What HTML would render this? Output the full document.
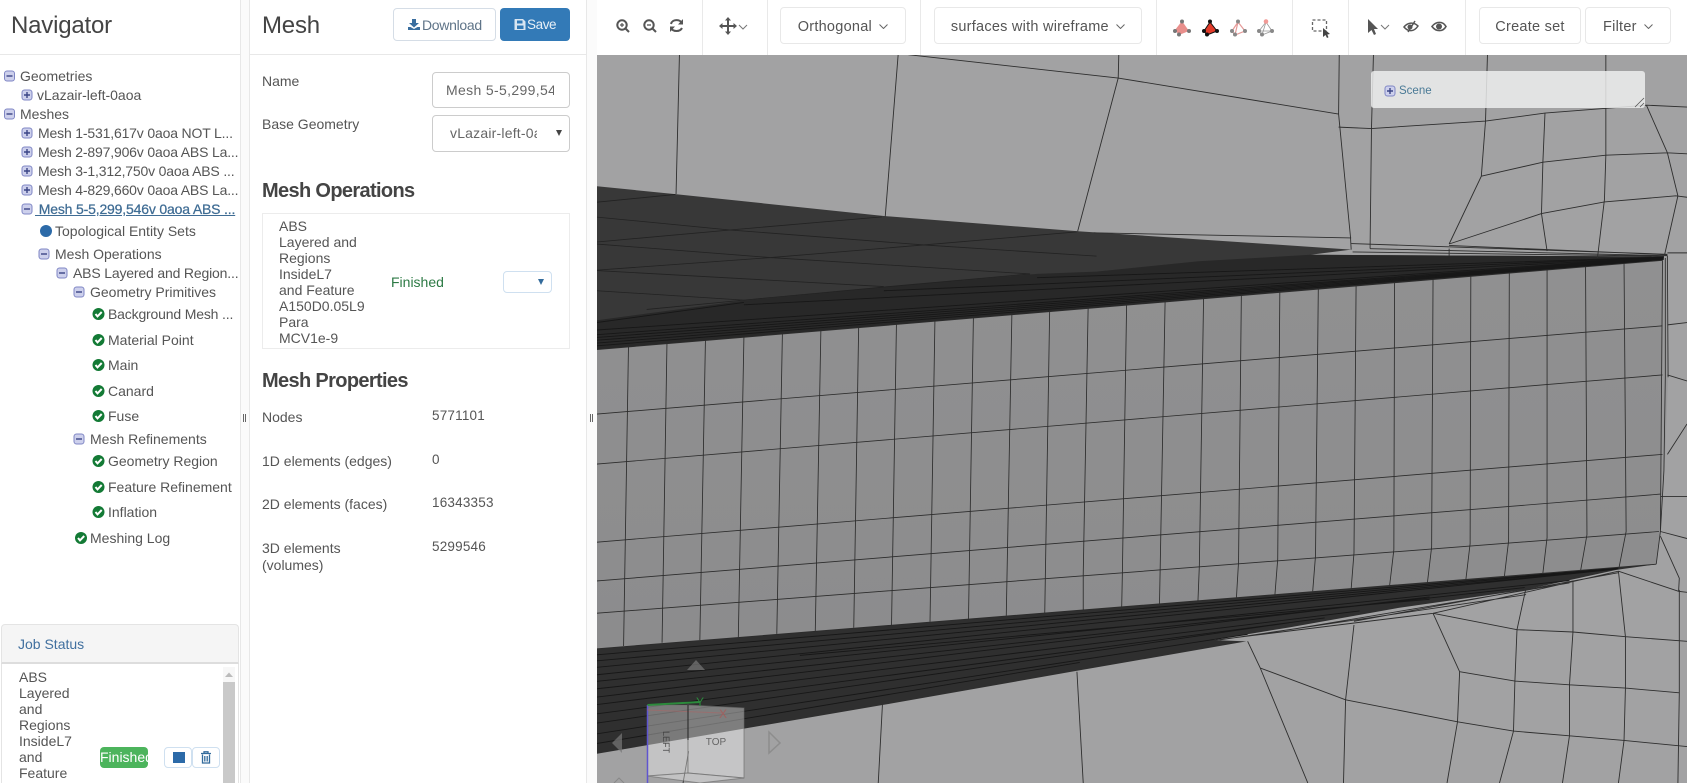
<!DOCTYPE html>
<html><head><meta charset="utf-8"><title>Mesh</title>
<style>
html,body{margin:0;padding:0;width:1687px;height:783px;overflow:hidden;background:#fff;font-family:"Liberation Sans",sans-serif;color:#555}
.a{position:absolute}
.t{position:absolute;white-space:nowrap;line-height:20px;font-size:14px;color:#555}
.m{letter-spacing:-.17px}
.h{font-size:20px;font-weight:bold;color:#444;letter-spacing:-.65px}
.v{font-size:13.5px;color:#555;letter-spacing:.2px}
.b{position:absolute;background:#fff;border:1px solid #e8e8e8;border-radius:4px;box-sizing:border-box;font-size:14.5px;color:#555;text-align:center;line-height:38px;letter-spacing:.25px}
.b svg{margin-left:3px;vertical-align:2px}
.sep{position:absolute;top:0;width:1px;height:55px;background:#e9e9e9}
svg.i{position:absolute;overflow:visible}
#m path{vector-effect:non-scaling-stroke}
</style></head><body>
<svg width="0" height="0" style="position:absolute"><defs>
<g id="mn"><rect x="-5" y="-5" width="10" height="10" rx="2.500" fill="#cdd0ec" stroke="#7f86c4"/><path d="M-3 0H3" stroke="#3b4586" stroke-width="1.400"/></g>
<g id="pl"><rect x="-5" y="-5" width="10" height="10" rx="2.500" fill="#cdd0ec" stroke="#7f86c4"/><path d="M-3 0H3M0-3V3" stroke="#3b4586" stroke-width="1.400"/></g>
<g id="ck"><circle r="6" fill="#137a35"/><path d="M-3 0L-1 2.400L3.200-2" fill="none" stroke="#fff" stroke-width="2"/></g>
</defs></svg>

<!-- panel bg -->
<div class="a" style="left:240px;top:0;width:10px;height:783px;background:#fbfbfb;border-left:1px solid #e8e8e8;border-right:1px solid #e8e8e8;box-sizing:border-box"></div>
<div class="a" style="left:586px;top:0;width:11px;height:783px;background:#fbfbfb;border-left:1px solid #e8e8e8;box-sizing:border-box"></div>
<div class="a" style="left:243px;top:414px;width:1px;height:8px;background:#666;box-shadow:2px 0 0 #666"></div>
<div class="a" style="left:590px;top:414px;width:1px;height:8px;background:#666;box-shadow:2px 0 0 #666"></div>
<div class="a" style="left:0;top:54px;width:240px;height:1px;background:#e8e8e8"></div>
<div class="a" style="left:250px;top:54px;width:336px;height:1px;background:#e8e8e8"></div>

<!-- navigator -->
<div class="t" style="left:11px;top:13px;font-size:24px;line-height:26px;color:#444;letter-spacing:-.2px">Navigator</div>
<svg class="i" style="left:0;top:0" width="240" height="560">
<use href="#mn" x="9.500" y="76"/><use href="#pl" x="27" y="95"/><use href="#mn" x="9.500" y="114"/>
<use href="#pl" x="27" y="133"/><use href="#pl" x="27" y="152"/><use href="#pl" x="27" y="171"/><use href="#pl" x="27" y="190"/><use href="#mn" x="27" y="209"/>
<circle cx="46" cy="231" r="6" fill="#2c6aa8"/>
<use href="#mn" x="44" y="254"/><use href="#mn" x="62" y="273"/><use href="#mn" x="79" y="292"/>
<use href="#ck" x="98.500" y="314"/><use href="#ck" x="98.500" y="340"/><use href="#ck" x="98.500" y="365"/><use href="#ck" x="98.500" y="391"/><use href="#ck" x="98.500" y="416"/>
<use href="#mn" x="79" y="439"/>
<use href="#ck" x="98.500" y="461"/><use href="#ck" x="98.500" y="487"/><use href="#ck" x="98.500" y="512"/><use href="#ck" x="81" y="538"/>
</svg>
<div class="t" style="left:20px;top:66px">Geometries</div>
<div class="t" style="left:37px;top:85px">vLazair-left-0aoa</div>
<div class="t" style="left:20px;top:104px">Meshes</div>
<div class="t m" style="left:38px;top:123px">Mesh 1-531,617v 0aoa NOT L...</div>
<div class="t m" style="left:38px;top:142px">Mesh 2-897,906v 0aoa ABS La...</div>
<div class="t m" style="left:38px;top:161px">Mesh 3-1,312,750v 0aoa ABS ...</div>
<div class="t m" style="left:38px;top:180px">Mesh 4-829,660v 0aoa ABS La...</div>
<div class="t m" style="left:35px;top:199px;color:#3f6c94;text-decoration:underline;-webkit-text-stroke:.25px #3f6c94">&nbsp;Mesh 5-5,299,546v 0aoa ABS ...</div>
<div class="t" style="left:55px;top:221px">Topological Entity Sets</div>
<div class="t" style="left:55px;top:244px">Mesh Operations</div>
<div class="t m" style="left:73px;top:263px">ABS Layered and Region...</div>
<div class="t" style="left:90px;top:282px">Geometry Primitives</div>
<div class="t m" style="left:108px;top:304px">Background Mesh ...</div>
<div class="t" style="left:108px;top:330px">Material Point</div>
<div class="t" style="left:108px;top:355px">Main</div>
<div class="t" style="left:108px;top:381px">Canard</div>
<div class="t" style="left:108px;top:406px">Fuse</div>
<div class="t" style="left:90px;top:429px">Mesh Refinements</div>
<div class="t" style="left:108px;top:451px">Geometry Region</div>
<div class="t" style="left:108px;top:477px">Feature Refinement</div>
<div class="t" style="left:108px;top:502px">Inflation</div>
<div class="t" style="left:90px;top:528px">Meshing Log</div>

<!-- job status -->
<div class="a" style="left:1px;top:624px;width:238px;height:40px;background:#f5f5f5;border:1px solid #e4e4e4;border-bottom:2px solid #ddd;border-radius:4px 4px 0 0;box-sizing:border-box"></div>
<div class="t" style="left:18px;top:634px;color:#41709f">Job Status</div>
<div class="a" style="left:1px;top:664px;width:1px;height:119px;background:#e4e4e4"></div>
<div class="a" style="left:238px;top:664px;width:1px;height:119px;background:#e4e4e4"></div>
<div class="a" style="left:223px;top:667px;width:12px;height:116px;background:#f7f7f7"></div>
<div class="a" style="left:223px;top:682px;width:12px;height:101px;background:#c9c9c9"></div>
<svg class="i" style="left:223px;top:671px" width="12" height="8"><path d="M2 6L6 1.500L10 6Z" fill="#bbb"/></svg>
<div class="t" style="left:19px;top:669px;font-size:14px;line-height:16px;white-space:pre">ABS
Layered
and
Regions
InsideL7
and
Feature</div>
<div class="a" style="left:100px;top:747px;width:48px;height:21px;background:#4cb45c;border-radius:4px;overflow:hidden;color:#fff;font-size:14px;line-height:21px;white-space:nowrap">Finished</div>
<div class="a" style="left:164px;top:747px;width:28px;height:21px;border:1px solid #cfe0f0;border-radius:4px;box-sizing:border-box"></div>
<div class="a" style="left:192px;top:747px;width:28px;height:21px;border:1px solid #cfe0f0;border-radius:4px;box-sizing:border-box"></div>
<div class="a" style="left:173px;top:752px;width:12px;height:11px;background:#2c6aa8"></div>
<svg class="i" style="left:201px;top:751px" width="10" height="13"><path d="M0 2.500H10M3 2.500V.8H7V2.500M1.500 3.500V12H8.500V3.500M3.800 5V10.500M6.200 5V10.500" fill="none" stroke="#336b9c" stroke-width="1.300"/></svg>

<!-- Mesh panel -->
<div class="t" style="left:262px;top:13px;font-size:24px;line-height:26px;color:#444;letter-spacing:-.2px">Mesh</div>
<div class="a" style="left:393px;top:8px;width:103px;height:33px;border:1px solid #d5dde6;border-radius:4px;box-sizing:border-box"></div>
<div class="a" style="left:500px;top:8px;width:70px;height:33px;background:#337ab7;border-radius:4px"></div>
<svg class="i" style="left:408px;top:19px" width="12" height="11"><path d="M4 0H8V4H11L6 8.500L1 4H4ZM0 8H2.500L6 10L9.500 8H12V11H0Z" fill="#3a6e9f"/></svg>
<div class="t" style="left:422px;top:15px;color:#5f7488;letter-spacing:-.3px">Download</div>
<svg class="i" style="left:514px;top:19px" width="12" height="11"><path d="M1 0H9L11.500 2.500V11H.500V.5ZM3 1.500V4.500H8.500V1.500ZM3 6.500V10H9.500V6.500Z" fill="#d9e6f2" fill-rule="evenodd"/></svg>
<div class="t" style="left:527px;top:15px;color:#e8f0f7;font-size:13.500px;letter-spacing:-.4px">Save</div>

<div class="t" style="left:262px;top:71px">Name</div>
<div class="a" style="left:432px;top:72px;width:138px;height:36px;border:1px solid #ccc;border-radius:4px;box-sizing:border-box"></div>
<div class="t" style="left:446px;top:80px;width:108px;overflow:hidden;letter-spacing:.35px;color:#666">Mesh 5-5,299,546</div>
<div class="t" style="left:262px;top:114px">Base Geometry</div>
<div class="a" style="left:432px;top:115px;width:138px;height:37px;border:1px solid #ccc;border-radius:4px;box-sizing:border-box"></div>
<div class="t" style="left:450px;top:123px;width:87px;overflow:hidden;letter-spacing:.2px;color:#666">vLazair-left-0aoa</div>
<svg class="i" style="left:556px;top:130px" width="6" height="6"><path d="M0 0H6L3 6Z" fill="#444"/></svg>

<div class="t h" style="left:262px;top:181px">Mesh Operations</div>
<div class="a" style="left:262px;top:213px;width:308px;height:136px;border:1px solid #ececec;box-sizing:border-box"></div>
<div class="t" style="left:279px;top:218px;line-height:16px;white-space:pre">ABS
Layered and
Regions
InsideL7
and Feature
A150D0.05L9
Para
MCV1e-9</div>
<div class="t" style="left:391px;top:272px;color:#2d7a45">Finished</div>
<div class="a" style="left:503px;top:271px;width:49px;height:22px;border:1px solid #cfe0f0;border-radius:4px;box-sizing:border-box"></div>
<svg class="i" style="left:538px;top:279px" width="6" height="6"><path d="M0 0H6L3 6Z" fill="#336b9c"/></svg>
<div class="t h" style="left:262px;top:371px">Mesh Properties</div>
<div class="t" style="left:262px;top:407px">Nodes</div><div class="t v" style="left:432px;top:406px">5771101</div>
<div class="t" style="left:262px;top:451px">1D elements (edges)</div><div class="t v" style="left:432px;top:450px">0</div>
<div class="t" style="left:262px;top:494px">2D elements (faces)</div><div class="t v" style="left:432px;top:493px">16343353</div>
<div class="t" style="left:262px;top:538px">3D elements</div><div class="t" style="left:262px;top:555px">(volumes)</div><div class="t v" style="left:432px;top:537px">5299546</div>

<!-- toolbar -->
<div class="sep" style="left:702px"></div><div class="sep" style="left:767px"></div><div class="sep" style="left:920px"></div><div class="sep" style="left:1156px"></div><div class="sep" style="left:1292px"></div><div class="sep" style="left:1348px"></div><div class="sep" style="left:1465px"></div>
<div class="b" style="left:780px;top:7px;width:126px;height:37px">Orthogonal <svg width="9" height="5"><path d="M.5.5L4.500 4.500L8.500.5" fill="none" stroke="#666"/></svg></div>
<div class="b" style="left:934px;top:7px;width:208px;height:37px">surfaces with wireframe <svg width="9" height="5"><path d="M.5.5L4.500 4.500L8.500.5" fill="none" stroke="#666"/></svg></div>
<div class="b" style="left:1479px;top:7px;width:102px;height:37px">Create set</div>
<div class="b" style="left:1585px;top:7px;width:86px;height:37px">Filter <svg width="9" height="5"><path d="M.5.5L4.500 4.500L8.500.5" fill="none" stroke="#666"/></svg></div>

<svg class="i" style="left:0;top:0" width="1687" height="55">
<g fill="none" stroke="#555" stroke-width="2">
<circle cx="622" cy="25" r="4.700"/><path d="M625.500 28.500L629 32"/><path d="M620 25H624M622 23V27" stroke-width="1.200"/>
<circle cx="649" cy="25" r="4.700"/><path d="M652.500 28.500L656 32"/><path d="M647 25H651" stroke-width="1.300"/>
<path d="M671 24C672 19 680 19 682 23M682 28C680 32 673 32 671 28"/>
</g>
<path d="M683 19V24.500H678ZM670 32V26.500H675Z" fill="#555"/>
<path d="M728 19V33M721 26H735" stroke="#555" stroke-width="2"/><path d="M728 17L731 20.500H725ZM728 35L731 31.500H725ZM719 26L722.500 23V29ZM737 26L733.500 23V29Z" fill="#555"/>
<path d="M739 25L743 29L747 25" fill="none" stroke="#777" stroke-width="1"/>
<!-- tetra icons -->
<path d="M1182 21L1175 30L1179 35L1189 31Z" fill="#e98f8c"/><g fill="#777"><circle cx="1182" cy="21.500" r="2"/><circle cx="1175" cy="31" r="2"/><circle cx="1179" cy="34.500" r="2"/><circle cx="1189" cy="31" r="2"/></g>
<path d="M1210 22L1204 31L1207 35L1217 31Z" fill="#e23b2a" stroke="#111"/><g fill="#111"><circle cx="1210" cy="21.500" r="2"/><circle cx="1204" cy="31" r="2"/><circle cx="1207" cy="34.500" r="2"/><circle cx="1217" cy="31" r="2"/></g>
<path d="M1238 22L1232 31L1235 35L1245 31ZM1238 22L1235 35" fill="none" stroke="#e69a98" stroke-width="1.200"/><g fill="#888"><circle cx="1238" cy="21.500" r="2"/><circle cx="1232" cy="31" r="2"/><circle cx="1235" cy="34.500" r="2"/><circle cx="1245" cy="31" r="2"/></g>
<path d="M1266 22L1259 31L1262 35L1272 31ZM1266 22L1262 35M1259 31L1272 31" fill="none" stroke="#999" stroke-width=".8"/><circle cx="1266" cy="21.500" r="2.300" fill="#f29a96"/><g fill="#888"><circle cx="1259" cy="31" r="2"/><circle cx="1262" cy="34.500" r="2"/><circle cx="1272" cy="31" r="2"/></g>
<rect x="1312.500" y="20" width="14" height="11" fill="none" stroke="#666" stroke-width="1.300" stroke-dasharray="3 2"/>
<path d="M1323 28L1323 37L1325.500 35L1327 38L1328.500 37.300L1327.300 34.500L1330 34Z" fill="#444"/>
<path d="M1368 19V33L1371.500 30L1374 35L1376 34L1374 29H1378Z" fill="#555"/>
<path d="M1381 25L1385 29L1389 25" fill="none" stroke="#777" stroke-width="1"/>
<path d="M1404 27C1408 22 1414 22 1418 26C1414 32 1408 32 1404 27Z" fill="none" stroke="#555" stroke-width="1.500"/><circle cx="1410" cy="27" r="2.500" fill="#555"/><path d="M1408 32L1415 21" stroke="#555" stroke-width="1.500"/>
<path d="M1432 26.500C1436 21 1443 21 1446 26.500C1443 32 1436 32 1432 26.500Z" fill="none" stroke="#555" stroke-width="1.600"/><circle cx="1439" cy="26.500" r="3" fill="#555"/>
</svg>

<!-- viewer -->
<div class="a" style="left:597px;top:55px;width:1090px;height:728px;overflow:hidden;background:#a2a2a3">
<svg id="m" style="position:absolute;left:-7px;top:-5px" width="1097" height="733" viewBox="0 0 1568 1568" preserveAspectRatio="none">
<defs><linearGradient id="fg" x1="0" y1="0" x2="0" y2="1"><stop offset="0" stop-color="#909091"/><stop offset="1" stop-color="#8c8c8d"/></linearGradient></defs>
<path d="M0 290L120 308L420 355L700 388L870 405L1088 427L1030 438L1535 442L1533 450L0 642Z" fill="#383838"/>
<path d="M0 642L1533 450L1530 1030L1524 1100L0 1282Z" fill="url(#fg)"/>
<path d="M1533 448L1540 440L1541 700L1536 900L1530 1030Z" fill="#9a9a9b"/>
<path d="M0 1282L1524 1100L1467 1112L1336 1155L1157 1193L1000 1235L890 1262L938 1265L696 1328L419 1401L0 1508Z" fill="#2f2f2f"/>
<path d="M0 580L220 536L420 507L639 479L724 474L870 452L1030 438L1535 442L1533 450L0 642Z" fill="#282828"/>
<g fill="none" stroke="#222" stroke-width=".8">
<path d="M0 327L122 309M0 356L200 385L477 417L724 441M0 412L200 385L417 357M0 414L258 444L629 479M0 472L258 444L477 417L696 389M0 471L420 506M0 514L220 535M81 555L220 535L420 507L629 479"/>
</g>
<g fill="none" stroke="#171717" stroke-width=".9">
<path d="M0 600L1535 443M0 610L1535 444M0 616L1535 445M0 622L1535 446M0 628L1535 447M0 634L1535 448M220 545L1535 444M420 515L1535 443M639 487L1535 443M0 585L220 540"/>
<path d="M0 1295L1470 1108M0 1308L1470 1109M0 1322L1470 1110M0 1338L1470 1110M0 1352L1400 1135M0 1368L1336 1150M0 1386L1200 1170M0 1402L1100 1200M0 1422L1050 1215M0 1442L1000 1225M0 1465L940 1250M0 1486L700 1310M300 1295L1200 1175"/>
</g>
<g fill="none" stroke="#2e2e2e" stroke-width=".9">
<path d="M128 0L123 308M441 0L422 356M455 10L755 60L1070 137M756 0L755 60L697 388M1071 0L1070 137L1087 400L1088 427M1120 0L1117 168L1115 425M1070 165L1117 168L1280 152L1365 135L1510 118L1568 122M1283 0L1280 152L1274 270L1228 415M1365 135L1362 240L1360 350L1368 430M1452 0L1452 225L1450 320L1440 445M1274 270L1362 240L1452 225L1540 220L1568 222M1228 415L1360 350L1450 325L1552 312L1568 315M1555 312L1536 438M1540 220L1555 312M1510 118L1540 220"/>
<path d="M720 391L1088 402M1088 414L1540 437M1115 425L1540 440M1228 418L1540 438M1090 432L1535 441M1228 425V440"/>
<path d="M1540 434L1568 434M1540 588L1568 583M1540 695L1568 708M1540 865L1568 800M1530 955L1568 955M1530 1030L1568 1045M1530 1040L1557 1130L1556 1158L1568 1160M1470 1115L1556 1158"/>
<path d="M940 1265L958 1322L1080 1390L1240 1437L1320 1457L1400 1467L1478 1477L1568 1490M958 1322L1026 1568M1080 1390L1077 1568M1092 1230L1080 1390M1205 1205L1243 1330L1240 1437L1225 1568M1205 1205L1325 1240L1405 1245L1480 1255L1568 1265M1243 1330L1322 1350L1400 1358L1480 1365L1557 1375M1338 1150L1325 1240L1322 1350L1320 1457L1300 1568M1405 1135L1405 1245L1400 1358L1400 1467L1390 1568M1470 1115L1480 1255L1480 1365L1478 1477L1470 1568M1557 1155L1557 1375L1555 1568M696 1330L705 1568M418 1400L412 1568M141 1500L133 1568"/>
<path d="M890 1263L1205 1205L1470 1115M900 1262L1338 1165M1000 1240L1400 1140M1092 1222L1470 1118"/>
</g>
<g fill="none" stroke="#2c2c2c" stroke-width=".85">
<path d="M55 634L48 1275M110 628L103 1268M165 621L157 1262M220 614L212 1256M275 607L267 1249M330 600L322 1243M384 593L377 1236M438 587L431 1230M493 580L486 1223M548 573L541 1217M603 566L595 1210M657 559L650 1204"/>
<path d="M712 552L705 1121L705 1197M767 545L761 1115L760 1191M822 539L815 1108L814 1184M877 532L871 1102L869 1178M931 525L927 1095L924 1171M986 518L983 1089L979 1165M1041 511L1037 1082L1033 1158M1095 505L1092 1076L1088 1152M1150 498L1149 1069L1143 1145M1205 491L1203 1063L1197 1139M1259 484L1258 1056L1252 1132M1314 477L1313 1050L1307 1126M1368 470L1368 1043L1362 1119M1423 464L1425 1037L1416 1113M1478 457L1481 1030L1471 1106"/>
<path d="M0 780L1533 590M0 887L1533 695M0 1054L1533 865M0 1137L1530 950M0 1206L1528 1030"/>
<path d="M1533 450L1530 1030L1524 1100M1537 445L1537 700L1535 900L1530 1030M1540 440L1541 700"/>
<path d="M0 642L1533 450M0 1282L1524 1100"/>
</g>
</svg>
</div>

<!-- gizmo -->
<svg class="i" style="left:597px;top:640px" width="200" height="143">
<g transform="translate(-597,-640)">
<path d="M696 660L705 670H687ZM622 733V753L612 743Z" fill="#777" fill-opacity=".7"/>
<path d="M769 732V753L780 743Z" fill="none" stroke="#8d8d8d" stroke-width="1.500"/>
<path d="M614 783L619 778L624 783" fill="none" stroke="#888"/>
<path d="M647.500 705H688V773L647.500 776Z" fill="#fff" fill-opacity=".36" stroke="#666" stroke-opacity=".4"/>
<path d="M688 705L744 708V778L688 773Z" fill="#fff" fill-opacity=".38" stroke="#666" stroke-opacity=".6"/>
<path d="M647 776L688 773L744 778L700 783Z" fill="#fff" fill-opacity=".35" stroke="#666" stroke-opacity=".6"/>
<path d="M647.500 705V783" stroke="#5f55d0" stroke-width="1.500"/>
<path d="M647.500 705L700 702" stroke="#2c8a3c" stroke-width="2"/>
<path d="M647 710L722 713" stroke="#a66" stroke-opacity=".6"/>
<path d="M688 705V740" stroke="#222" stroke-width="1"/>
<text x="700" y="706" font-size="12" fill="#2c8a3c" font-family="Liberation Sans" text-anchor="middle">Y</text>
<text x="723" y="718" font-size="12" fill="#a0605f" font-family="Liberation Sans" text-anchor="middle">X</text>
<text x="716" y="745" font-size="10" fill="#666" font-family="Liberation Sans" text-anchor="middle">TOP</text>
<text transform="translate(663,742) rotate(90)" font-size="9" fill="#444" font-family="Liberation Sans" text-anchor="middle">LEFT</text>
</g></svg>

<!-- scene -->
<div class="a" style="left:1371px;top:71px;width:274px;height:37px;background:rgba(240,241,241,.82);border-radius:3px"></div>
<svg class="i" style="left:1371px;top:71px" width="274" height="37"><use href="#pl" x="19" y="20"/><path d="M264 36L273 27M269 36L273 32" stroke="#555" stroke-width=".8"/></svg>
<div class="t" style="left:1399px;top:81px;font-size:11.500px;color:#4a7a96">Scene</div>
</body></html>
